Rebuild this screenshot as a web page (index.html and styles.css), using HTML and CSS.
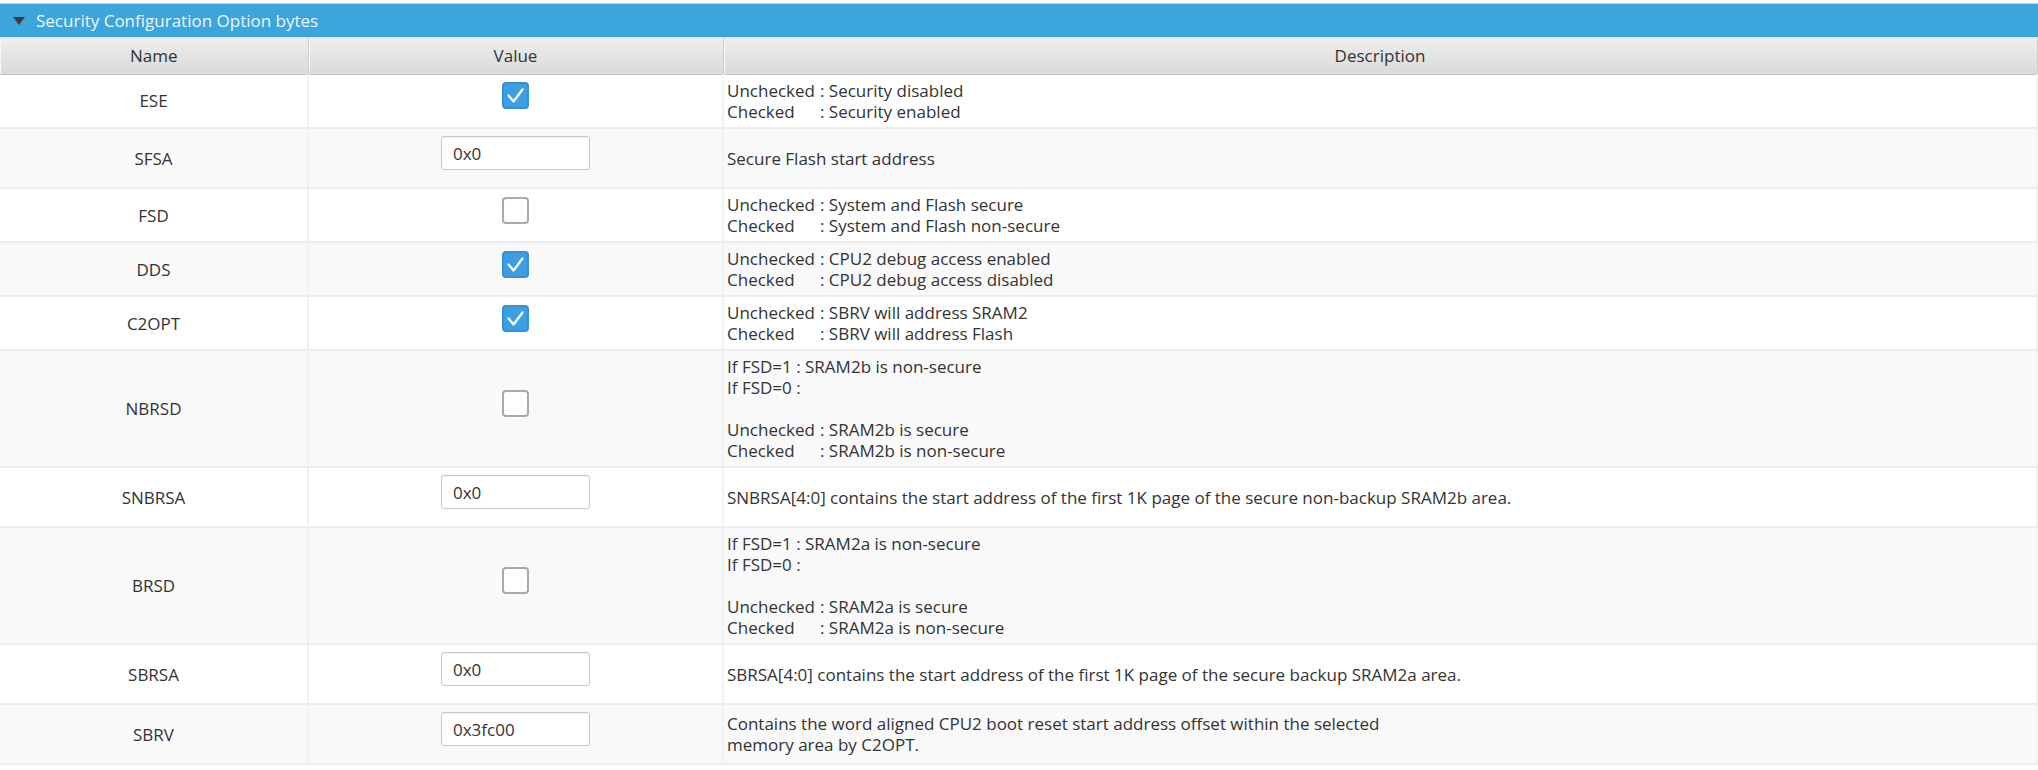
FILE: index.html
```html
<!DOCTYPE html>
<html lang="en">
<head>
    <meta charset="UTF-8">
    <meta name="viewport" content="width=device-width, initial-scale=1.0">
    <title>Security Configuration Option bytes</title>
    <link rel="stylesheet" href="styles.css">
</head>
<body>
    <div class="panel">
        <div class="panel-title">
            <svg class="caret" width="12" height="8" viewBox="0 0 12 8"><polygon points="0,0 12,0 6,8" fill="#3d3d3d"/></svg>
            <span>Security Configuration Option bytes</span>
        </div>

        <table class="options">
            <colgroup>
                <col class="col-name">
                <col class="col-value">
                <col>
            </colgroup>
            <thead>
                <tr>
                    <th>Name</th>
                    <th>Value</th>
                    <th>Description</th>
                </tr>
            </thead>
            <tbody>
                <tr class="row-short">
                    <td class="name">ESE</td>
                    <td class="value">
                        <span class="check checked"><svg width="23" height="23" viewBox="0 0 23 23"><path d="M4.5 11.5 L9.5 17.5 L18.5 5.5" /></svg></span>
                    </td>
                    <td class="desc">
                        <div class="pairs">
                            <span>Unchecked</span><span>: Security disabled</span>
                            <span>Checked</span><span>: Security enabled</span>
                        </div>
                    </td>
                </tr>
                <tr class="row-field">
                    <td class="name">SFSA</td>
                    <td class="value"><input class="field" type="text" value="0x0"></td>
                    <td class="desc">Secure Flash start address</td>
                </tr>
                <tr class="row-short">
                    <td class="name">FSD</td>
                    <td class="value"><span class="check"></span></td>
                    <td class="desc">
                        <div class="pairs">
                            <span>Unchecked</span><span>: System and Flash secure</span>
                            <span>Checked</span><span>: System and Flash non-secure</span>
                        </div>
                    </td>
                </tr>
                <tr class="row-short">
                    <td class="name">DDS</td>
                    <td class="value">
                        <span class="check checked"><svg width="23" height="23" viewBox="0 0 23 23"><path d="M4.5 11.5 L9.5 17.5 L18.5 5.5" /></svg></span>
                    </td>
                    <td class="desc">
                        <div class="pairs">
                            <span>Unchecked</span><span>: CPU2 debug access enabled</span>
                            <span>Checked</span><span>: CPU2 debug access disabled</span>
                        </div>
                    </td>
                </tr>
                <tr class="row-short">
                    <td class="name">C2OPT</td>
                    <td class="value">
                        <span class="check checked"><svg width="23" height="23" viewBox="0 0 23 23"><path d="M4.5 11.5 L9.5 17.5 L18.5 5.5" /></svg></span>
                    </td>
                    <td class="desc">
                        <div class="pairs">
                            <span>Unchecked</span><span>: SBRV will address SRAM2</span>
                            <span>Checked</span><span>: SBRV will address Flash</span>
                        </div>
                    </td>
                </tr>
                <tr class="row-tall">
                    <td class="name">NBRSD</td>
                    <td class="value"><span class="check"></span></td>
                    <td class="desc">
                        <div>If FSD=1 : SRAM2b is non-secure</div>
                        <div>If FSD=0 :</div>
                        <div class="blank"></div>
                        <div class="pairs">
                            <span>Unchecked</span><span>: SRAM2b is secure</span>
                            <span>Checked</span><span>: SRAM2b is non-secure</span>
                        </div>
                    </td>
                </tr>
                <tr class="row-field">
                    <td class="name">SNBRSA</td>
                    <td class="value"><input class="field" type="text" value="0x0"></td>
                    <td class="desc">SNBRSA[4:0] contains the start address of the first 1K page of the secure non-backup SRAM2b area.</td>
                </tr>
                <tr class="row-tall">
                    <td class="name">BRSD</td>
                    <td class="value"><span class="check"></span></td>
                    <td class="desc">
                        <div>If FSD=1 : SRAM2a is non-secure</div>
                        <div>If FSD=0 :</div>
                        <div class="blank"></div>
                        <div class="pairs">
                            <span>Unchecked</span><span>: SRAM2a is secure</span>
                            <span>Checked</span><span>: SRAM2a is non-secure</span>
                        </div>
                    </td>
                </tr>
                <tr class="row-field">
                    <td class="name">SBRSA</td>
                    <td class="value"><input class="field" type="text" value="0x0"></td>
                    <td class="desc">SBRSA[4:0] contains the start address of the first 1K page of the secure backup SRAM2a area.</td>
                </tr>
                <tr class="row-field">
                    <td class="name">SBRV</td>
                    <td class="value"><input class="field" type="text" value="0x3fc00"></td>
                    <td class="desc">Contains the word aligned CPU2 boot reset start address offset within the selected<br>memory area by C2OPT.</td>
                </tr>
            </tbody>
        </table>
    </div>
</body>
</html>
```

FILE: styles.css
```css
/* Reset & Base Styles */
* {
    box-sizing: border-box;
    margin: 0;
    padding: 0;
}

body {
    font-family: "Open Sans", "Noto Sans", sans-serif;
    font-size: 17px;
    color: #333;
    background: #ffffff;
    padding-top: 3px;
}

/* Title Bar */
.panel-title {
    height: 35px;
    display: flex;
    align-items: center;
    gap: 11px;
    padding-left: 13px;
    background-color: #3ba5dc;
    border-top: 1px solid #a9d8f0;
    border-bottom: 1px solid #c6e9f8;
    color: #eef8fd;
    font-size: 17px;
}

.caret {
    flex-shrink: 0;
}

/* Table */
.options {
    width: 100%;
    border-collapse: collapse;
    table-layout: fixed;
}

.col-name {
    width: 308px;
}

.col-value {
    width: 415px;
}

th {
    height: 36px;
    font-weight: normal;
    color: #333;
    background: linear-gradient(#eeeeee, #dadada);
    border-right: 1px solid #cdcdcd;
    border-bottom: 1px solid #c6c6c6;
    box-shadow: inset 1px 0 0 #f7f7f7;
}

td {
    padding: 4px 3px;
    line-height: 21px;
    vertical-align: middle;
    border-right: 2px solid #f2f2f2;
    border-bottom: 2px solid #ededed;
}

tbody tr:nth-child(even) td {
    background-color: #f9f9f9;
}

.row-short {
    height: 54px;
}

.row-field {
    height: 60px;
}

.row-tall {
    height: 117px;
}

.name {
    text-align: center;
}

.value {
    text-align: center;
    padding-bottom: 14px;
}

.desc {
    padding-left: 3px;
}

.blank {
    height: 21px;
}

.pairs {
    display: grid;
    grid-template-columns: max-content max-content;
    column-gap: 5px;
}

/* Checkbox */
.check {
    display: inline-block;
    width: 27px;
    height: 27px;
    vertical-align: middle;
    background-color: #ffffff;
    border: 2px solid #a9a9a9;
    border-radius: 4px;
}

.check.checked {
    background-color: #3d9fe3;
    border-color: #3890d0;
}

.check svg {
    display: block;
    fill: none;
    stroke: #ffffff;
    stroke-width: 2.2;
    stroke-linecap: round;
    stroke-linejoin: round;
}

/* Text Field */
.field {
    width: 149px;
    height: 34px;
    padding: 0 11px;
    vertical-align: middle;
    font-family: inherit;
    font-size: 17px;
    color: #333;
    background-color: #ffffff;
    border: 1px solid #c9c9c9;
    border-radius: 3px;
    box-shadow: inset 0 1px 1px rgba(0, 0, 0, 0.06);
}
```
